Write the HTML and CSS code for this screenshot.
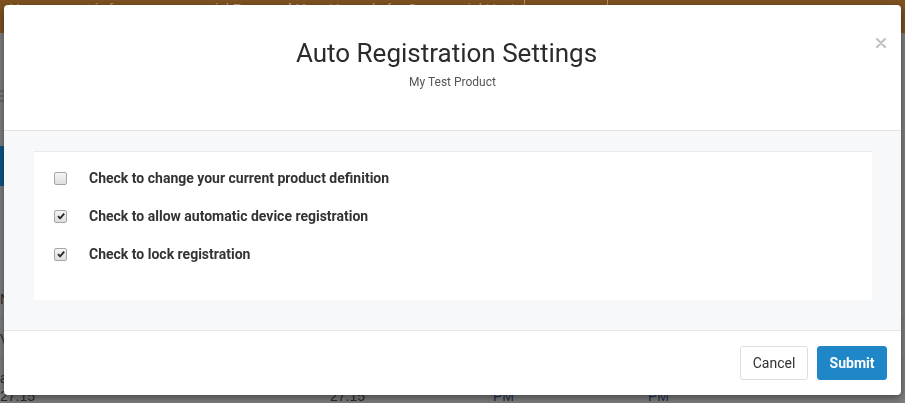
FILE: index.html
```html
<!DOCTYPE html>
<html lang="en">
<head>
<meta charset="utf-8">
<title>Auto Registration Settings</title>
<link rel="stylesheet" href="styles.css">
</head>
<body>
  <div class="page">
    <div class="banner">
      <div class="banner-text">Your account is for non-commercial&nbsp;<b>Personal Use</b>. Upgrade for Commercial Use!<span class="sep"></span><span class="upgrade">UPGRADE</span><span class="sep sep-end"></span></div>
    </div>
    <div class="content">
      <div class="menu-icon"><span></span><span></span><span></span></div>
      <div class="blue-btn"></div>
      <div class="list">
        <div class="list-row">Name</div>
        <div class="list-row">Version</div>
        <div class="list-row grid-row">
          <div class="cell"><span>a</span><span>27.15</span></div>
          <div class="cell"><span>&nbsp;</span><span>27.15</span></div>
          <div class="cell link"><span>&nbsp;</span><span>PM</span></div>
          <div class="cell link"><span>&nbsp;</span><span>PM</span></div>
        </div>
      </div>
    </div>
  </div>

  <div class="modal">
    <button class="close" type="button" aria-label="Close">
      <svg width="10" height="10" viewBox="0 0 10 10"><path d="M1 1L9 9M9 1L1 9" stroke="#c4c4c4" stroke-width="2.4" stroke-linecap="round"/></svg>
    </button>
    <div class="modal-header">
      <h2 class="modal-title">Auto Registration Settings</h2>
      <div class="modal-subtitle">My Test Product</div>
    </div>
    <div class="modal-body">
      <div class="panel">
        <label class="check-row">
          <span class="checkbox"></span>
          <span class="check-label">Check to change your current product definition</span>
        </label>
        <label class="check-row">
          <span class="checkbox checked"><svg width="10" height="10" viewBox="0 0 10 10"><path d="M2 5.2L4.1 7.3L8.2 2.6" fill="none" stroke="#2a2a2a" stroke-width="1.9" stroke-linejoin="round"/></svg></span>
          <span class="check-label">Check to allow automatic device registration</span>
        </label>
        <label class="check-row">
          <span class="checkbox checked"><svg width="10" height="10" viewBox="0 0 10 10"><path d="M2 5.2L4.1 7.3L8.2 2.6" fill="none" stroke="#2a2a2a" stroke-width="1.9" stroke-linejoin="round"/></svg></span>
          <span class="check-label">Check to lock registration</span>
        </label>
      </div>
    </div>
    <div class="modal-footer">
      <button class="btn btn-default" type="button">Cancel</button>
      <button class="btn btn-primary" type="button">Submit</button>
    </div>
  </div>
</body>
</html>
```

FILE: styles.css
```css
* { box-sizing: border-box; }

html, body {
  margin: 0;
  padding: 0;
  width: 905px;
  height: 403px;
  overflow: hidden;
  background: #7f7f7f;
  font-family: "Liberation Sans", Arial, sans-serif;
}

.page {
  display: flex;
  flex-direction: column;
  height: 403px;
}

.banner {
  height: 33px;
  background: #7e5221;
  overflow: hidden;
  flex: none;
}

.banner-text {
  margin-top: -11px;
  padding-left: 10px;
  font-size: 14px;
  line-height: 20px;
  color: #bc9c74;
  white-space: nowrap;
  display: flex;
  align-items: center;
}

.sep {
  display: inline-block;
  width: 1px;
  height: 40px;
  background: #b3936b;
  margin: 0 14px 0 10px;
}

.sep-end { margin: 0 0 0 12px; }

.upgrade {
  font-size: 11px;
  letter-spacing: 0.1px;
}

.content {
  flex: 1;
  display: flex;
  flex-direction: column;
}

.menu-icon {
  margin-top: 57px;
  width: 4px;
  height: 12px;
  display: flex;
  flex-direction: column;
  justify-content: space-between;
}

.menu-icon span {
  height: 2px;
  background: #6a6a6a;
}

.blue-btn {
  margin-top: 44px;
  height: 40px;
  width: 120px;
  background: #0e5685;
}

.list {
  margin-top: 93px;
  display: flex;
  flex-direction: column;
}

.list-row {
  height: 40px;
  border-bottom: 1px solid #737373;
  font-size: 14px;
  line-height: 40px;
  color: #2b2b2b;
  white-space: nowrap;
}

.grid-row {
  border-bottom: none;
  display: grid;
  grid-template-columns: 330px 163px 155px 120px;
  line-height: 18px;
  padding-top: 10px;
}

.cell {
  display: flex;
  flex-direction: column;
}

.cell.link { color: #1c3152; }

/* Modal */
.modal {
  position: fixed;
  left: 4px;
  top: 5px;
  width: 897px;
  background: #fff;
  border-radius: 4px;
  box-shadow: 0 3px 8px rgba(0, 0, 0, 0.45);
  font-family: Roboto, "Liberation Sans", Arial, sans-serif;
  color: #333;
}

.close {
  position: absolute;
  right: 15px;
  top: 33px;
  width: 10px;
  height: 10px;
  padding: 0;
  border: 0;
  background: none;
  display: flex;
}

.modal-header {
  height: 126px;
  border-bottom: 1px solid #e5e5e5;
  padding-top: 34px;
  text-align: center;
}

.modal-title {
  margin: 0;
  padding-right: 12px;
  font-size: 26px;
  font-weight: 400;
  line-height: 28.6px;
  color: #2b2b2b;
}

.modal-subtitle {
  margin-top: 6px;
  font-size: 12px;
  line-height: 17px;
  color: #555;
}

.modal-body {
  background: #f7f8fa;
  padding: 20px 29px 30px 30px;
}

.panel {
  background: #fff;
  border-top: 1px solid #e7eaee;
  padding: 16px 20px 36px 20px;
  display: flex;
  flex-direction: column;
  gap: 18px;
}

.check-row {
  display: flex;
  align-items: center;
  height: 20px;
}

.checkbox {
  width: 13px;
  height: 13px;
  flex: none;
  border: 1px solid #a6a6a6;
  border-radius: 2px;
  background: linear-gradient(#f4f4f4, #dedede);
  display: flex;
  align-items: center;
  justify-content: center;
  margin-right: 22px;
}

.check-label {
  font-size: 14px;
  font-weight: 700;
  line-height: 20px;
  color: #333;
}

.modal-footer {
  border-top: 1px solid #e5e5e5;
  padding: 15px 14px 15px 0;
  display: flex;
  justify-content: flex-end;
  gap: 9px;
}

.btn {
  height: 34px;
  font-family: Roboto, "Liberation Sans", Arial, sans-serif;
  font-size: 14px;
  border-radius: 3px;
  padding: 0 11px;
  cursor: pointer;
}

.btn-default {
  background: #fff;
  border: 1px solid #dedede;
  color: #333;
  width: 68px;
}

.btn-primary {
  background: #1f86c8;
  border: 1px solid #1f86c8;
  color: #fff;
  font-weight: 700;
  width: 70px;
}
```
